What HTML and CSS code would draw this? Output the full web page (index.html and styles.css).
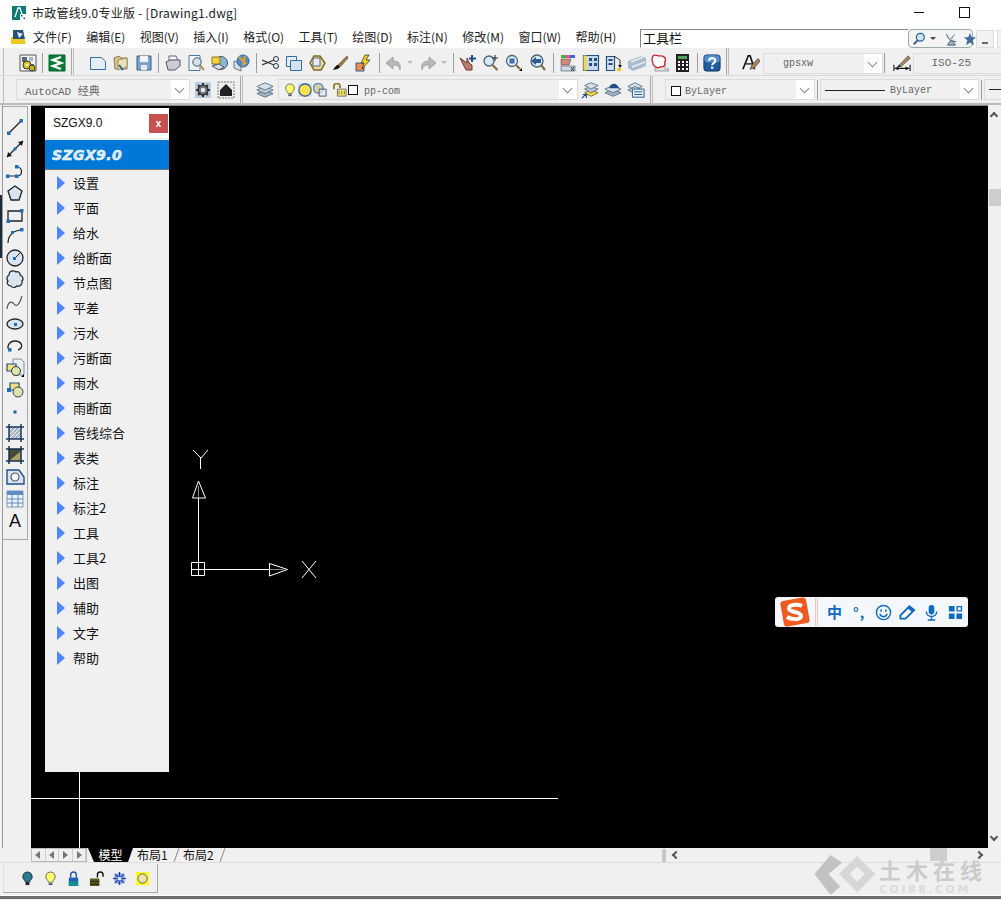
FILE: index.html
```html
<!DOCTYPE html>
<html lang="zh">
<head>
<meta charset="utf-8">
<title>市政管线9.0专业版</title>
<link rel="stylesheet" href="styles.css">
</head>
<body>
<svg class="sprite" xmlns="http://www.w3.org/2000/svg">
  <symbol id="cfg" viewBox="0 0 18 18"><path d="M1 1h16v16H1z" fill="#f2f2f2" stroke="#555"/><path d="M3 3h5v5H3zM10 10h5v5h-5z" fill="#5a6a7a"/><path d="M10 3h4v4h-4z" fill="#9fb4c6"/><circle cx="8" cy="11" r="4" fill="#d8c820" stroke="#333"/><circle cx="13" cy="14" r="3" fill="#c8b810" stroke="#333"/><circle cx="8" cy="11" r="1.300" fill="#fff"/></symbol>
  <symbol id="sz" viewBox="0 0 18 18"><path d="M1 1h16v16H1z" fill="#0a7a30"/><path d="M1 1h16v16H1z" fill="none" stroke="#063" /><path d="M13 3L5 6l8 3-8 3 8 3" fill="none" stroke="#fff" stroke-width="2.400"/></symbol>
  <symbol id="new" viewBox="0 0 18 18"><path d="M1.500 3.500h11l4 4v8h-15z" fill="#e4eef6" stroke="#2f6ea5"/></symbol>
  <symbol id="open" viewBox="0 0 18 18"><path d="M2 4l5-2 2 2h6v11H3z" fill="#d9c48a" stroke="#8a7a4a"/><path d="M6 6l9-2v9l-9 3z" fill="#efe2b8" stroke="#a08f5c"/><path d="M7 11l4 5" stroke="#2a5d9c" stroke-width="2"/></symbol>
  <symbol id="save" viewBox="0 0 18 18"><path d="M2 2h14v14H2z" fill="#7fa3c7" stroke="#2f5f8f"/><path d="M5 2h8v6H5z" fill="#eef3f8"/><path d="M6 11h6v5H6z" fill="#dfe8f0"/></symbol>
  <symbol id="print" viewBox="0 0 18 18"><path d="M5 2h7l2 5H5z" fill="#f4f4f4" stroke="#667"/><path d="M2 8l4-2h10v6l-5 4H4z" fill="#c9ced6" stroke="#556"/></symbol>
  <symbol id="preview" viewBox="0 0 18 18"><path d="M2 1.500h11v15H2z" fill="#f2f6fa" stroke="#4a7aa6"/><circle cx="10" cy="8" r="4.200" fill="#cfe3f2" stroke="#456"/><path d="M13 11l4 5" stroke="#a9864d" stroke-width="2"/></symbol>
  <symbol id="publish" viewBox="0 0 18 18"><circle cx="11" cy="9" r="6.500" fill="#8db5d8" stroke="#456"/><path d="M2 3h8v7H2z" fill="#f2d23e" stroke="#8a7a20"/><path d="M2 12l7-2 5 3-5 3z" fill="#d7dde4" stroke="#556"/></symbol>
  <symbol id="web" viewBox="0 0 18 18"><path d="M1 7l7 3v7l-7-3z" fill="#d5dbe4" stroke="#778"/><circle cx="10" cy="7" r="6" fill="#4b8fd0" stroke="#2f5f9f"/><path d="M6 3l7 7M12 2l-2 10" stroke="#e8a020" stroke-width="2"/></symbol>
  <symbol id="cut" viewBox="0 0 18 18"><path d="M0 6l12 5M0 11l12-5" stroke="#333" stroke-width="1.300"/><circle cx="14" cy="5" r="2.500" fill="none" stroke="#234"/><circle cx="14" cy="12" r="2.500" fill="none" stroke="#234"/></symbol>
  <symbol id="copy" viewBox="0 0 18 18"><path d="M1.500 2.500h10v10h-10z" fill="#e6eef5" stroke="#2f6ea5"/><path d="M5.500 6.500h11v10h-11z" fill="#d4e2ee" stroke="#2f6ea5"/></symbol>
  <symbol id="paste" viewBox="0 0 18 18"><path d="M6 2l6 0 5 7-4 7H6L2 9z" fill="#e6d9a8" stroke="#806a20" stroke-width="1.500"/><path d="M5 4h7v8H5z" fill="#e8eef4" stroke="#567"/></symbol>
  <symbol id="brush" viewBox="0 0 18 18"><path d="M16 2L7 11l2 2 8-9z" fill="#a8784a" stroke="#5c3a1a" stroke-width=".6"/><path d="M7 11c-2 0-3 2-5 5 3-.5 6-1 7-3z" fill="#111"/></symbol>
  <symbol id="match" viewBox="0 0 18 18"><path d="M2 9h8v8H2z" fill="#f28a50" stroke="#2f5f8f"/><path d="M11 1L7 9h3l-2 6 8-9h-4l3-5z" fill="#f0d020" stroke="#222" stroke-width=".7"/></symbol>
  <symbol id="undo" viewBox="0 0 18 18"><path d="M15 16c1-6-1-9-7-9V3L1 9l7 6v-4c4 0 6 1 7 5z" fill="#b8b8b8" stroke="#a4a4a4"/></symbol>
  <symbol id="redo" viewBox="0 0 18 18"><path d="M3 16c-1-6 1-9 7-9V3l7 6-7 6v-4c-4 0-6 1-7 5z" fill="#b8b8b8" stroke="#a4a4a4"/></symbol>
  <symbol id="pan" viewBox="0 0 18 18"><path d="M1 4l7 5V4l2 5 3 2v5H7z" fill="#b97c6e" stroke="#6d3a30"/><path d="M13 1v7M10 4.500h7" stroke="#1d4f8c" stroke-width="2"/></symbol>
  <symbol id="zoom" viewBox="0 0 18 18"><circle cx="7" cy="7" r="5" fill="#d7e8f4" stroke="#4a6478" stroke-width="1.300"/><path d="M10.500 11l5 5" stroke="#8a6a3a" stroke-width="2.200"/><path d="M13 1v6M10 4h6" stroke="#222"/></symbol>
  <symbol id="zoomw" viewBox="0 0 18 18"><circle cx="7" cy="7" r="5.500" fill="#e0edf6" stroke="#4a6478" stroke-width="1.300"/><path d="M4.500 4.500h5v5h-5z" fill="#3a6fb0"/><path d="M11 11l4 4" stroke="#8a6a3a" stroke-width="2.200"/><path d="M14 17l3-3v3z" fill="#000"/></symbol>
  <symbol id="zoomp" viewBox="0 0 18 18"><circle cx="9" cy="7" r="6" fill="#d7e8f4" stroke="#4a6478" stroke-width="1.300"/><path d="M3 7l5-4v2h5v4H8v2z" fill="#2f5d92"/><path d="M13 11l4 5" stroke="#8a6a3a" stroke-width="2.200"/></symbol>
  <symbol id="props" viewBox="0 0 18 18"><path d="M2 1h14v3H2z" fill="#e05090"/><path d="M2 1h5v3H2z" fill="#40b040"/><path d="M11 1h5v3h-5z" fill="#4060e0"/><path d="M2 5l10 0-2 6H2z" fill="#c98a80" stroke="#633" stroke-width=".5"/><path d="M2 12h14v5H2z" fill="#cfd8e2" stroke="#456" stroke-width=".6"/><path d="M12 13l3 4m-3 0l3-4" stroke="#234"/></symbol>
  <symbol id="design" viewBox="0 0 18 18"><path d="M1.500 1.500h15v15h-15z" fill="#c5d8ea" stroke="#24507e" stroke-width="1.200"/><path d="M1.500 1.500h3v15h-3z" fill="#f0d84a"/><path d="M7 4h3v3H7zM12 4h3v3h-3zM7 9h3v3H7zM12 9h3v3h-3z" fill="#24507e"/></symbol>
  <symbol id="tool" viewBox="0 0 18 18"><path d="M1.500 2.500h8v14h-8z" fill="#d2e0ee" stroke="#24507e" stroke-width="1.200"/><path d="M3.500 5h4v2h-4zM3.500 9h4v2h-4z" fill="#24507e"/><path d="M9 2l6 4v5" fill="none" stroke="#333"/><path d="M13 11h4l-2 3z" fill="#111"/><path d="M12 14h4v3h-4z" fill="#e8c820"/></symbol>
  <symbol id="sheet" viewBox="0 0 18 18"><path d="M0 7l13-5 5 2v8l-13 5-5-3z" fill="#a9bccb"/><path d="M3 8l12-5M4 13l13-5" stroke="#e8eef4" stroke-width="1.500"/></symbol>
  <symbol id="cloud" viewBox="0 0 18 18"><path d="M4 3h10v12h4v2H4z" fill="#e4e4e4" stroke="#667" stroke-width=".6"/><path d="M2 2c2-2 5 0 6 0s3-1 5 1 2 3 1 4 1 3-1 5-3 0-4 1-3 1-4 0-3-1-3-3-1-3-1-4 0-3 1-4z" fill="#fff" stroke="#d02030" stroke-width="1.300"/></symbol>
  <symbol id="calc" viewBox="0 0 18 18"><path d="M2 0h13v18H2z" fill="#222"/><path d="M4 2h9v3H4z" fill="#50a060"/><path d="M4 7h2v2H4zM8 7h2v2H8zM12 7h2v2h-2zM4 10h2v2H4zM8 10h2v2H8zM12 10h2v2h-2zM4 14h2v2H4zM8 14h2v2H8zM12 14h2v2h-2z" fill="#fff"/></symbol>
  <symbol id="help" viewBox="0 0 20 20"><rect x="1" y="1" width="18" height="18" rx="3" fill="#1d5a9e" stroke="#10325a"/><rect x="1.500" y="1.500" width="17" height="8" rx="3" fill="#4f8fcb"/><path d="M6.800 7.500c0-4 6.800-4 6.800 0 0 2.800-3.400 2.500-3.400 5" fill="none" stroke="#fff" stroke-width="2.400"/><path d="M9 14h2.500v2.500H9z" fill="#fff"/></symbol>
  <symbol id="style" viewBox="0 0 20 20"><path d="M1 17L7 2h2l5 15" fill="none" stroke="#111" stroke-width="1.800"/><path d="M4 11h8" stroke="#111" stroke-width="1.400"/><path d="M18 5l-7 7-2 5 5-2 6-7z" fill="#a9865a" stroke="#333" stroke-width=".7"/></symbol>
  <symbol id="dim" viewBox="0 0 20 20"><path d="M1 12v7M19 12v7M2 16h16" stroke="#111" stroke-width="1.200"/><path d="M2 16l4-2v4zM18 16l-4-2v4z" fill="#111"/><path d="M17 2L7 12l2 2 10-9z" fill="#a9865a" stroke="#333" stroke-width=".6"/><path d="M7 12l-3 3 5-1z" fill="#111"/></symbol>
  <symbol id="gear" viewBox="0 0 18 18"><path d="M1 1h16v16H1z" fill="#b8cde0"/><circle cx="9" cy="9" r="5" fill="#6e7680" stroke="#333" stroke-width="1.200"/><circle cx="9" cy="9" r="2.200" fill="#e8ecf0"/><path d="M9 2v3M9 13v3M2 9h3M13 9h3M4 4l2 2M14 14l-2-2M14 4l-2 2M4 14l2-2" stroke="#333" stroke-width="2"/></symbol>
  <symbol id="wspace" viewBox="0 0 18 18"><path d="M1 1h16v16H1z" fill="#eee" stroke="#777" stroke-dasharray="2 1"/><path d="M3 9l6-6 6 6v6H3z" fill="#222"/></symbol>
  <symbol id="layers" viewBox="0 0 20 20"><path d="M1 14l9-4 9 4-9 4z" fill="#9fb4c6" stroke="#5b7287"/><path d="M1 10l9-4 9 4-9 4z" fill="#bccbd8" stroke="#5b7287"/><path d="M1 6l9-4 9 4-9 4z" fill="#d7e1ea" stroke="#5b7287"/></symbol>
  <symbol id="layer2" viewBox="0 0 20 20"><path d="M4 13l7-3 8 3-8 4z" fill="#f0d84a" stroke="#806a20"/><path d="M4 9l7-3 8 3-8 4z" fill="#bccbd8" stroke="#5b7287"/><path d="M4 5l7-3 8 3-8 4z" fill="#d7e1ea" stroke="#5b7287"/><path d="M1 19l5-5M2 15h4v4" fill="none" stroke="#1d4f8c" stroke-width="1.300"/></symbol>
  <symbol id="layer3" viewBox="0 0 20 20"><path d="M1 13l9-4 9 4-9 4z" fill="#9fb4c6" stroke="#5b7287"/><path d="M1 9l9-4 9 4-9 4z" fill="#d7e1ea" stroke="#5b7287"/><path d="M6 8a5 5 0 0 1 9-3l2 3h-7z" fill="#1d4f8c"/></symbol>
  <symbol id="layer4" viewBox="0 0 20 20"><path d="M1 6l8-4 8 4-8 4z" fill="#d7e1ea" stroke="#5b7287"/><path d="M1 10l8-4 8 4-8 4z" fill="#bccbd8" stroke="#5b7287"/><path d="M6 9h13v9H6z" fill="#e8f0f7" stroke="#1d4f8c"/><path d="M8 12h9M8 15h9" stroke="#1d4f8c"/></symbol>
  <symbol id="bulb" viewBox="0 0 16 16"><path d="M8 1a5 5 0 0 0-3 9l1 2h4l1-2a5 5 0 0 0-3-9z" fill="#ffff70" stroke="#666"/><path d="M6 13h4v2H6z" fill="#555"/></symbol>
  <symbol id="sun" viewBox="0 0 16 16"><path d="M0 0h16v16H0z" fill="#cfe0f0"/><circle cx="8" cy="8" r="7" fill="#f8e050" stroke="#1d4f8c" stroke-width="1.200"/></symbol>
  <symbol id="frz" viewBox="0 0 16 16"><circle cx="6" cy="6" r="5.500" fill="#d5d2a8" stroke="#6d8db0" stroke-width="1.800"/><path d="M7 7h8v8H7z" fill="#dfe8f2" fill-opacity=".7" stroke="#446"/></symbol>
  <symbol id="lockopen" viewBox="0 0 16 16"><path d="M1 7V4a3.500 3.500 0 0 1 7 0v2" fill="none" stroke="#8a7a20" stroke-width="2"/><path d="M5 7h10v8H5z" fill="#f0e870" stroke="#666"/><path d="M7 9v4M10 9v4M13 9v4" stroke="#8a7a20"/></symbol>
  <symbol id="line" viewBox="0 0 20 20"><path d="M4 16L16 4" stroke="#222" stroke-width="1.200"/><path d="M2 14.500h3.500V18H2zM14.500 2H18v3.500h-3.500z" fill="#1d6fc4"/></symbol>
  <symbol id="xline" viewBox="0 0 20 20"><path d="M2 18L18 2" stroke="#222" stroke-width="1.300"/><path d="M18 2l-5 1 4 4zM2 18l5-1-4-4z" fill="#111"/><path d="M8.500 8.500h3v3h-3z" fill="#1d6fc4"/></symbol>
  <symbol id="pline" viewBox="0 0 20 20"><path d="M3 15h9c6 0 6-9 0-9" fill="none" stroke="#222" stroke-width="1.200"/><path d="M1 13.500h3.500V17H1zM10 13.500h3.500V17H10zM10 4h3.500v3.500H10z" fill="#1d6fc4"/></symbol>
  <symbol id="polygon" viewBox="0 0 20 20"><path d="M10 3l7 5-3 9H6L3 8z" fill="#d8e5f0" stroke="#222" stroke-width="1.300"/></symbol>
  <symbol id="rect" viewBox="0 0 20 20"><path d="M3 6h14v10H3z" fill="#e8f0f7" stroke="#222" stroke-width="1.300"/><path d="M1.500 14.500H5V18H1.500zM15 4h3.500v3.500H15z" fill="#1d6fc4"/></symbol>
  <symbol id="arc" viewBox="0 0 20 20"><path d="M3 17c0-7 5-13 14-13" fill="none" stroke="#222" stroke-width="1.200"/><path d="M6 5h3v3H6zM15 2h3.500v3.500H15z" fill="#1d6fc4"/></symbol>
  <symbol id="circle" viewBox="0 0 20 20"><circle cx="10" cy="10" r="8" fill="#d8e5f0" stroke="#222" stroke-width="1.300"/><path d="M10 10l5-5" stroke="#222"/><path d="M8 9h3v3H8z" fill="#1d6fc4"/></symbol>
  <symbol id="rev" viewBox="0 0 20 20"><path d="M5 2c2-2 5-1 6 0 2-1 5 1 4 3 3 1 4 4 2 6 1 3-2 6-5 5-2 2-5 2-6 0-3 0-5-3-3-5-2-2-1-5 1-6 0-1 0-2 1-3z" fill="#d8e5f0" stroke="#222" stroke-width="1.200"/></symbol>
  <symbol id="spline" viewBox="0 0 20 20"><path d="M2 17c1-8 5-8 7-5s5 2 8-8" fill="none" stroke="#555" stroke-width="1.200"/></symbol>
  <symbol id="ellipse" viewBox="0 0 20 20"><ellipse cx="10" cy="10" rx="8" ry="5" fill="#d8e5f0" stroke="#222" stroke-width="1.300"/><path d="M9 9h3v3H9z" fill="#1d6fc4"/></symbol>
  <symbol id="earc" viewBox="0 0 20 20"><path d="M6 15C0 12 4 5 10 5s10 6 3 9" fill="none" stroke="#222" stroke-width="1.300"/><path d="M3 12h3.500v3.500H3z" fill="#1d6fc4"/></symbol>
  <symbol id="insert" viewBox="0 0 20 20"><path d="M8 1h8l3 3v13H8z" fill="#e8eef4" stroke="#7890a8"/><path d="M2 6h9v7H2z" fill="#f0e080" stroke="#1d4f8c" stroke-width="1.200"/><circle cx="11" cy="13" r="4.500" fill="#dbe3b0" stroke="#333"/><path d="M16 19l3-3v3z" fill="#000"/></symbol>
  <symbol id="block" viewBox="0 0 20 20"><path d="M5 3h9v7H5z" fill="#f0e080" stroke="#1d4f8c" stroke-width="1.200"/><circle cx="13" cy="12" r="5" fill="#dbe3b0" stroke="#445"/><path d="M2 8h4v4H2z" fill="#1d6fc4"/></symbol>
  <symbol id="point" viewBox="0 0 20 20"><path d="M8.500 8.500h3v3h-3z" fill="#1d5fa8"/></symbol>
  <symbol id="hatch" viewBox="0 0 20 20"><path d="M4 4h12v12H4z" fill="#a9b4c2"/><path d="M4 8l4-4M4 12l8-8M4 16L16 4M8 16l8-8M12 16l4-4" stroke="#fff"/><path d="M1 4h18M1 16h18M4 1v18M16 1v18" stroke="#183a63" stroke-width="1.500"/></symbol>
  <symbol id="grad" viewBox="0 0 20 20"><path d="M4 4h12v12H4z" fill="#4a4a38"/><path d="M4 16L16 6v10z" fill="#a8a468"/><path d="M1 4h18M1 16h18M4 1v18M16 1v18" stroke="#14304f" stroke-width="1.500"/></symbol>
  <symbol id="region" viewBox="0 0 20 20"><path d="M2 3h12l5 7v7H2z" fill="#d8e5f0" stroke="#1d4f8c" stroke-width="1.400"/><circle cx="10" cy="10" r="4" fill="#f4f8fb" stroke="#556"  stroke-width="1.200"/></symbol>
  <symbol id="table" viewBox="0 0 20 20"><path d="M2 2h16v16H2z" fill="#eef3f8" stroke="#7f9cb8"/><path d="M2 2h16v4H2z" fill="#5f8dc0"/><path d="M2 10h16M2 14h16M7 6v12M13 6v12" stroke="#5f8dc0"/></symbol>
  <symbol id="sk-bulb-off" viewBox="0 0 16 16"><path d="M8 1a5 5 0 0 0-3 9l1 2h4l1-2a5 5 0 0 0-3-9z" fill="#2a7a90" stroke="#234"/><path d="M6 12h4v3H6z" fill="#222"/></symbol>
  <symbol id="sk-lock" viewBox="0 0 16 16"><path d="M5 7V4a3 3 0 0 1 6 0v3" fill="none" stroke="#2050b0" stroke-width="1.500"/><path d="M3 7h10v9H3z" fill="#2060b0"/><path d="M3 11h10v5H3z" fill="#109090"/></symbol>
  <symbol id="sk-unlock" viewBox="0 0 16 16"><path d="M9 7V4a3 3 0 0 1 6 0v2" fill="none" stroke="#111" stroke-width="1.500"/><path d="M1 8h10v8H1z" fill="#5a5a10"/><path d="M1 11h10M1 14h10" stroke="#222"/></symbol>
  <symbol id="sk-frz" viewBox="0 0 16 16"><circle cx="8" cy="8" r="6" fill="#8aa4e8"/><path d="M8 1v14M1 8h14M3 3l10 10M13 3L3 13" stroke="#1f3fa8" stroke-width="1.300"/><circle cx="8" cy="8" r="2" fill="#dfe8fb"/></symbol>
  <symbol id="sk-sun" viewBox="0 0 16 16"><path d="M1 1h14v14H1z" fill="#ffff20"/><circle cx="8" cy="8" r="5" fill="#e8e4b0" stroke="#555"/></symbol>
</svg>

<div class="app">
  <header class="titlebar">
    <svg class="appicon" viewBox="0 0 14 14"><path d="M0 0h14v14H0z" fill="#0d7a78"/><path d="M3 11l3-9h2l3 9" fill="none" stroke="#fff" stroke-width="1.300"/><path d="M8 8h6v6H8z" fill="#fff"/><path d="M9 9h1.500v1.500H9zM11.500 11.500H13V13h-1.500z" fill="#0d5a58"/></svg>
    <span class="titletext">市政管线9.0专业版 - [Drawing1.dwg]</span>
    <div class="winctl">
      <span class="winmin"></span>
      <span class="winmax"></span>
    </div>
  </header>

  <nav class="menubar">
    <svg class="docicon" viewBox="0 0 16 16"><path d="M0 8l12-2 3 9H0z" fill="#f0c820"/><path d="M2 1h10l2 9H2z" fill="#24507e"/><path d="M6 3l6 2-4 4z" fill="#e6eef5"/></svg>
    <ul class="menus">
      <li>文件(F)</li><li>编辑(E)</li><li>视图(V)</li><li>插入(I)</li><li>格式(O)</li><li>工具(T)</li><li>绘图(D)</li><li>标注(N)</li><li>修改(M)</li><li>窗口(W)</li><li>帮助(H)</li>
    </ul>
    <div class="search">工具栏</div>
    <div class="searchbtns">
      <svg viewBox="0 0 16 16" class="sb-mag"><circle cx="9.500" cy="6" r="4.500" fill="#d0e4f4" stroke="#2f5f8f" stroke-width="1.400"/><path d="M6.500 9.500L2 14" stroke="#2f5f8f" stroke-width="2.200"/></svg>
      <span class="sb-caret"></span>
      <svg viewBox="0 0 16 16" class="sb-sat"><path d="M3 2c1 6 5 9 11 9" fill="#cfdce8" stroke="#456"/><path d="M8 8l4-5" stroke="#456"/><path d="M4 15h9l-3-5H7z" fill="#9fb4c6" stroke="#456"/></svg>
      <svg viewBox="0 0 16 16" class="sb-star"><path d="M8 1l2 5h5l-4 3.500 1.500 5.500L8 12l-4.500 3L5 9.500 1 6h5z" fill="#3f6a9e"/></svg>
    </div>
    <div class="mdibtn"><span></span></div>
    <div class="mdibtn"></div>
  </nav>

  <div class="toolbar first">
    <div class="tbgroup g-first">
      <svg class="ico"><use href="#cfg"/></svg>
      <i class="sep"></i>
      <svg class="ico"><use href="#sz"/></svg>
    </div>
    <div class="tbgroup g-std">
      <svg class="ico"><use href="#new"/></svg><svg class="ico"><use href="#open"/></svg><svg class="ico"><use href="#save"/></svg>
      <i class="sep"></i>
      <svg class="ico"><use href="#print"/></svg><svg class="ico"><use href="#preview"/></svg><svg class="ico"><use href="#publish"/></svg><svg class="ico"><use href="#web"/></svg>
      <i class="sep"></i>
      <svg class="ico"><use href="#cut"/></svg><svg class="ico"><use href="#copy"/></svg><svg class="ico"><use href="#paste"/></svg><svg class="ico"><use href="#brush"/></svg><svg class="ico"><use href="#match"/></svg>
      <i class="sep wide"></i>
      <svg class="ico"><use href="#undo"/></svg><span class="drop"></span><svg class="ico"><use href="#redo"/></svg><span class="drop"></span>
      <i class="sep"></i>
      <svg class="ico"><use href="#pan"/></svg><svg class="ico"><use href="#zoom"/></svg><svg class="ico"><use href="#zoomw"/></svg><svg class="ico"><use href="#zoomp"/></svg>
      <i class="sep wide"></i>
      <svg class="ico"><use href="#props"/></svg><svg class="ico"><use href="#design"/></svg><svg class="ico"><use href="#tool"/></svg><svg class="ico"><use href="#sheet"/></svg><svg class="ico"><use href="#cloud"/></svg><svg class="ico"><use href="#calc"/></svg>
      <i class="sep"></i>
      <svg class="ico"><use href="#help"/></svg>
    </div>
    <div class="tbgroup g-style">
      <svg class="ico"><use href="#style"/></svg>
      <div class="combo c-style"><span class="combotext">gpsxw</span><b class="arrow"></b></div>
      <i class="sep tight"></i>
      <svg class="ico"><use href="#dim"/></svg>
      <div class="combo c-dim"><span class="combotext big">ISO-25</span></div>
    </div>
  </div>

  <div class="toolbar second">
    <div class="tbgroup g-ws">
      <div class="combo c-ws"><span class="combotext big">AutoCAD 经典</span><b class="arrow"></b></div>
      <svg class="ico"><use href="#gear"/></svg><svg class="ico"><use href="#wspace"/></svg>
    </div>
    <div class="tbgroup g-layer">
      <svg class="ico"><use href="#layers"/></svg>
      <div class="combo c-layer">
        <svg class="mini"><use href="#bulb"/></svg><svg class="mini"><use href="#sun"/></svg><svg class="mini"><use href="#frz"/></svg><svg class="mini lock"><use href="#lockopen"/></svg><span class="swatch"></span>
        <span class="combotext lname">pp-com</span><b class="arrow"></b>
      </div>
      <svg class="ico"><use href="#layer2"/></svg><svg class="ico"><use href="#layer3"/></svg><svg class="ico"><use href="#layer4"/></svg>
    </div>
    <div class="tbgroup g-prop">
      <div class="combo c-color"><span class="swatch"></span><span class="combotext">ByLayer</span><b class="arrow"></b></div>
      <i class="sep narrow"></i>
      <div class="combo c-ltype"><span class="lt"></span><span class="combotext">ByLayer</span><b class="arrow"></b></div>
      <i class="sep narrow"></i>
      <div class="combo c-lw"><span class="lt"></span></div>
    </div>
  </div>

  <main class="work">
    <aside class="edge"></aside>
    <div class="drawbar">
      <svg class="dico"><use href="#line"/></svg><svg class="dico"><use href="#xline"/></svg><svg class="dico"><use href="#pline"/></svg><svg class="dico"><use href="#polygon"/></svg><svg class="dico"><use href="#rect"/></svg><svg class="dico"><use href="#arc"/></svg><svg class="dico"><use href="#circle"/></svg><svg class="dico"><use href="#rev"/></svg><svg class="dico"><use href="#spline"/></svg><svg class="dico"><use href="#ellipse"/></svg><svg class="dico"><use href="#earc"/></svg><svg class="dico"><use href="#insert"/></svg><svg class="dico"><use href="#block"/></svg><svg class="dico"><use href="#point"/></svg><svg class="dico"><use href="#hatch"/></svg><svg class="dico"><use href="#grad"/></svg><svg class="dico"><use href="#region"/></svg><svg class="dico"><use href="#table"/></svg>
      <span class="dtext">A</span>
    </div>
    <div class="canvas">
      <svg class="cad" viewBox="31 106 957 742" width="957" height="742">
        <g fill="none" stroke="#fff" stroke-width="1">
          <path d="M31 798.500H558M79.500 700V848"/>
          <path d="M191.500 562.500h13v13h-13zM198.500 575.500V498M204.500 569.500H269M191.500 569.500h13"/>
          <path d="M198.500 481l-6 17h13z"/>
          <path d="M269.500 563.500v12.500l18-6.500z"/>
          <path d="M198.500 486v12M269.500 569.500h14" stroke="#888"/>
          <path d="M302 561l14 17M316 561l-14 17M193 450l8 8 7-8M200.500 458v11"/>
        </g>
      </svg>

      <section class="palette">
        <div class="palhead"><span>SZGX9.0</span><button class="palclose">x</button></div>
        <div class="pallogo">SZGX9.0</div>
        <ul class="pallist">
          <li>设置</li><li>平面</li><li>给水</li><li>给断面</li><li>节点图</li><li>平差</li><li>污水</li><li>污断面</li><li>雨水</li><li>雨断面</li><li>管线综合</li><li>表类</li><li>标注</li><li>标注2</li><li>工具</li><li>工具2</li><li>出图</li><li>辅助</li><li>文字</li><li>帮助</li>
        </ul>
      </section>

      <div class="ime">
        <svg class="imelogo" viewBox="0 0 32 32"><rect x="3" y="3" width="26" height="26" rx="3" transform="rotate(-10 16 16)" fill="#f05a20"/><path d="M23 10c-3-2-13-2-13 2.500S22 15 22 20s-11 3-14 1" fill="none" stroke="#fff" stroke-width="4"/></svg>
        <i class="imesep"></i>
        <span class="imezh">中</span>
        <span class="imepunct">°,</span>
        <svg class="imeico" viewBox="0 0 18 18"><circle cx="9" cy="9" r="7.500" fill="none" stroke="#0f6cc4" stroke-width="1.500"/><path d="M6.500 5.500v3M11.500 5.500v3M5 10.500c2 4 6 4 8 0" fill="none" stroke="#0f6cc4" stroke-width="1.400"/></svg>
        <svg class="imeico" viewBox="0 0 18 18"><path d="M1.500 12L11 2.500l5 4-9 9H1.500z" fill="none" stroke="#0f6cc4" stroke-width="2"/><path d="M9 4.500l5 4 2.500-2.500L11 1.500z" fill="#0f6cc4"/></svg>
        <svg class="imeico" viewBox="0 0 18 18"><rect x="6" y="1" width="6" height="10" rx="3" fill="#0f6cc4"/><path d="M3.500 8c0 7 11 7 11 0M9 13v4M5 17h8" fill="none" stroke="#0f6cc4" stroke-width="1.500"/></svg>
        <svg class="imeico" viewBox="0 0 18 18"><path d="M2 2h6v6H2zM2 10h6v6H2zM10 10h6v6h-6z" fill="#0f6cc4"/><path d="M10.700 2.700h4.600v4.600h-4.600z" fill="none" stroke="#0f6cc4" stroke-width="1.400"/></svg>
      </div>
    </div>
    <div class="vscroll">
      <span class="chev up"></span>
      <span class="vthumb"></span>
      <span class="chev down"></span>
    </div>
  </main>

  <div class="tabrow">
    <div class="tabnav">
      <span class="nav first"></span><span class="nav prev"></span><span class="nav next"></span><span class="nav last"></span>
    </div>
    <div class="tabs">
      <span class="tab active">模型</span><span class="tab">布局1</span><span class="tab">布局2</span>
    </div>
    <div class="hscroll">
      <span class="hgrip"></span>
      <span class="chev left"></span>
      <span class="hthumb"></span>
      <span class="chev right"></span>
    </div>
  </div>

  <footer class="statusrow">
    <div class="statusbox">
      <svg class="sico"><use href="#sk-bulb-off"/></svg><svg class="sico"><use href="#bulb"/></svg><svg class="sico"><use href="#sk-lock"/></svg><svg class="sico"><use href="#sk-unlock"/></svg><svg class="sico"><use href="#sk-frz"/></svg><svg class="sico"><use href="#sk-sun"/></svg>
    </div>
  </footer>
  <div class="bottomline"></div>

  <div class="watermark">
    <svg class="wmlogo" viewBox="0 0 60 42"><path d="M1 20L18 0l12 8-14 12 12 13-10 9z" fill="#c2c2c2"/><path d="M27 20L46 1l19 19-19 19z" fill="#d6d6d6"/><path d="M38 20l8-8 8 8-8 8z" fill="#f0f0f0"/></svg>
    <div class="wmtext"><div class="wmcn">土木在线</div><div class="wmen">COI88.COM</div></div>
  </div>
</div>
</body>
</html>
```
FILE: styles.css
```css
* { box-sizing: border-box; }
html, body { margin: 0; padding: 0; }
body { background: #f0f0f0; font-family: "Noto Sans CJK SC", "Liberation Sans", sans-serif; color: #111; }
.sprite { position: absolute; width: 0; height: 0; overflow: hidden; }
ul { list-style: none; margin: 0; padding: 0; }

.app { position: relative; width: 1001px; height: 900px; overflow: hidden; background: #f0f0f0; display: flex; flex-direction: column; }

.titlebar { height: 28px; background: #fff; display: flex; align-items: center; padding-left: 12px; flex: none; }
.appicon { width: 14px; height: 14px; margin-top: -2px; }
.titletext { margin-left: 6px; font-size: 12px; line-height: 14px; margin-top: -2px; color: #222; letter-spacing: .26px; }
.winctl { margin-left: auto; display: flex; align-items: center; padding-right: 31px; margin-top: -4px; }
.winmin { width: 10px; height: 1px; background: #111; margin-right: 35px; }
.winmax { width: 11px; height: 11px; border: 1px solid #111; }

.menubar { height: 20px; background: #fff; display: flex; align-items: flex-start; padding: 1px 0 0 11px; flex: none; }
.docicon { width: 16px; height: 16px; flex: none; }
.menus { display: flex; flex: none; margin-left: 6px; width: 607px; font-size: 12px; color: #222; overflow: hidden; }
.menus li { line-height: 16px; white-space: nowrap; margin-right: 14.400px; flex: none; }
.search { width: 268px; height: 19px; flex: none; background: #fff; border: 1px solid #888; border-right: 0; border-bottom-color: #fff; font-size: 13px; line-height: 16px; padding-left: 2px; color: #111; }
.searchbtns { width: 65px; height: 19px; flex: none; border: 1px solid #9aa; border-radius: 4px; display: flex; align-items: center; padding-left: 3px; gap: 1px; background: #f4f4f4; }
.searchbtns svg { width: 14px; height: 14px; flex: none; }
.sb-caret { width: 0; height: 0; border: 3px solid transparent; border-top: 3px solid #444; margin: 3px 3px 0 3px; flex: none; }
.searchbtns .sb-sat { margin: 0 4px 0 4px; }
.mdibtn { width: 18px; height: 18px; margin: 1px 0 0 3px; background: #f2f2f2; border: 1px solid #ddd; flex: none; position: relative; }
.mdibtn span { position: absolute; left: 5px; bottom: 3px; width: 6px; height: 2px; background: #667; }

.toolbar { height: 28px; display: flex; align-items: stretch; flex: none; padding-left: 3px; background: #f0f0f0; border-bottom: 1px solid #dadada; }
.toolbar.first .tbgroup { padding-top: 3px; }
.toolbar.second { height: 29px; border-bottom: 2px solid #bbb; }
.tbgroup { display: flex; align-items: center; border-left: 1px solid #bdbdbd; border-right: 1px solid #a8a8a8; margin: 0 1px 0 0; flex: none; }
.g-first { width: 69px; padding-left: 12px; }
.g-std { width: 654px; padding-left: 12px; }
.g-style { width: 300px; padding-left: 10px; border-right: 0; }
.g-ws { width: 238px; padding-left: 12px; }
.g-layer { width: 409px; padding-left: 10px; margin-right: 1px; }
.g-prop { width: 400px; padding-left: 12px; border-right: 0; }

.ico { width: 18px; height: 18px; margin: 0 2.500px; flex: none; }
.sep { width: 1px; height: 20px; background: #9c9c9c; margin: 0 2.500px; flex: none; }
.sep.wide { margin: 0 2.500px 0 4.500px; }
.sep.tight { margin: 0 5.500px 0 1px; }
.sep.narrow { margin: 0 2px; height: 20px; }
.drop { width: 11px; height: 4px; flex: none; position: relative; }
.drop::after { content: ""; position: absolute; left: 2px; top: 0; border: 3px solid transparent; border-top: 3px solid #bbb; }

.combo { height: 21px; display: flex; align-items: center; background: #f0f0f0; border: 1px solid #dcdcdc; flex: none; position: relative; color: #666; }
.combotext { font-family: "Liberation Mono", "Noto Sans CJK SC", monospace; font-size: 10px; color: #666; white-space: nowrap; }
.combotext.big { font-size: 11px; }
.arrow { position: absolute; right: 0; top: 0; width: 18px; height: 19px; background: #fff; }
.arrow::after { content: ""; position: absolute; left: 5px; top: 5px; width: 6px; height: 6px; border-right: 1px solid #888; border-bottom: 1px solid #888; transform: rotate(45deg); }
.c-style { width: 120px; margin-left: 1px; padding-left: 19px; }
.c-dim { width: 100px; margin-left: -1px; padding-left: 18px; }
.c-ws { width: 174px; margin-right: 1px; padding-left: 8px; }
.c-layer { width: 300px; margin: 0 0 0 2px; padding-left: 4px; gap: 0; }
.mini { width: 14px; height: 14px; margin-right: 1px; flex: none; }
.mini.lock { margin: 0 1px 0 5px; }
.swatch { width: 10px; height: 10px; border: 1px solid #111; background: #fff; flex: none; }
.lname { margin: 3px 0 0 6px; }
.c-color { width: 150px; padding: 3px 0 0 5px; gap: 4px; }
.c-ltype { width: 159px; padding: 2px 0 0 4px; gap: 5px; justify-content: flex-start; }
.lt { width: 60px; height: 1px; background: #222; flex: none; }
.c-lw { width: 40px; padding-left: 4px; border-right: 0; }

.work { height: 743px; display: flex; flex: none; background: #f0f0f0; }
.edge { width: 3px; height: 743px; border-right: 1px solid #9a9a9a; flex: none; background: linear-gradient(to bottom, transparent 90px, #1d2a38 90px, #1d2a38 153px, transparent 153px); }
.drawbar { width: 25px; height: 434px; margin-top: 1px; border: 1px solid #a8a8a8; border-left: 0; display: flex; flex-direction: column; align-items: center; padding-top: 10px; flex: none; }
.dico { width: 20px; height: 20px; margin-bottom: 1.900px; flex: none; }
.dtext { font-family: "Liberation Sans", sans-serif; font-size: 18px; line-height: 20px; color: #111; }
.canvas { position: relative; width: 957px; margin-left: 3px; background: #000; border-top: 1px solid #888; flex: none; }
.cad { position: absolute; left: 0; top: 0; }
.palette { position: absolute; left: 14px; top: 2px; width: 124px; height: 664px; background: #f0f0f0; }
.palhead { height: 30px; background: #fff; display: flex; align-items: center; justify-content: space-between; padding: 0 1px 0 8px; font-family: "Liberation Sans", sans-serif; font-size: 12px; color: #111; }
.palclose { width: 19px; height: 19px; padding: 0; border: 0; background: #c75050; color: #fff; font: bold 10px/19px "Liberation Sans", sans-serif; }
.pallogo { margin-top: 2px; height: 30px; background: #0078d7; color: #d5e9fb; font-family: "DejaVu Sans", sans-serif; font-weight: 700; font-size: 14px; line-height: 30px; padding-left: 7px; border-bottom: 1px solid #777; font-style: italic; -webkit-text-stroke: .5px #fff; letter-spacing: .4px; }
.pallist { padding: 0; margin-top: 0; }
.pallist li { height: 25px; display: flex; align-items: center; font-size: 13px; line-height: 25px; padding-left: 12px; color: #111; }
.pallist li::before { content: ""; width: 0; height: 0; border-left: 8px solid #4d86ff; border-top: 7px solid transparent; border-bottom: 7px solid transparent; margin-right: 8px; }

.ime { position: absolute; left: 744px; top: 491px; width: 193px; height: 30px; background: #f4f7fc; border-radius: 3px; display: flex; align-items: center; padding-left: 4px; }
.imelogo { width: 32px; height: 32px; flex: none; }
.imesep { width: 3px; height: 28px; border-left: 1px solid #f6c4b0; border-right: 1px solid #f6c4b0; margin: 0 9px 0 4px; flex: none; }
.imezh { font-size: 15px; font-weight: 700; color: #0f6cc4; line-height: 30px; width: 17px; flex: none; }
.imepunct { font-size: 14px; font-weight: 700; color: #0f6cc4; width: 22px; margin-left: 9px; letter-spacing: 1px; flex: none; }
.imeico { width: 17px; height: 17px; margin-right: 7px; flex: none; }

.vscroll { position: relative; flex: 1; background: #f0f0f0; }
.vthumb { position: absolute; left: 1px; top: 84px; width: 12px; height: 17px; background: #cdcdcd; }
.chev { position: absolute; width: 6px; height: 6px; border-left: 2px solid #555; border-top: 2px solid #555; }
.chev.up { left: 3px; top: 8px; transform: rotate(45deg); }
.chev.down { left: 3px; top: 729px; transform: rotate(225deg); }
.chev.left { left: 11px; top: 4px; transform: rotate(-45deg); }
.chev.right { left: 314px; top: 4px; transform: rotate(135deg); }

.tabrow { height: 15px; display: flex; flex: none; padding-left: 31px; background: #f0f0f0; border-bottom: 1px solid #ddd; }
.tabnav { width: 56px; display: flex; border: 1px solid #bbb; flex: none; height: 14px; }
.nav { flex: 1; border-right: 1px solid #ccc; position: relative; }
.nav::before { content: ""; position: absolute; top: 2px; border: 4.500px solid transparent; }
.nav.first::before, .nav.prev::before { left: -1px; border-right: 5px solid #777; border-left: 0; margin-left: 4px; }
.nav.next::before, .nav.last::before { left: 4px; border-left: 5px solid #777; border-right: 0; }
.tabs { display: flex; width: 575px; flex: none; font-size: 12px; line-height: 14px; color: #111; padding-left: 1px; }
.tab { width: 46px; flex: none; padding-left: 4px; white-space: nowrap; height: 14px; position: relative; }
.tab::after { content: ""; position: absolute; right: 2px; top: 0; width: 1px; height: 14px; background: #888; transform: rotate(20deg); }
.tab.active { background: #000; color: #fff; padding: 0; clip-path: polygon(0 0, 100% 0, calc(100% - 5px) 100%, 6px 100%); width: 45px; text-align: center; }
.tab.active::after { display: none; }
.hscroll { position: relative; flex: 1; }
.hgrip { position: absolute; left: 0; top: 1px; width: 4px; height: 13px; background: #c8c8c8; }
.hthumb { position: absolute; left: 268px; top: 0; width: 17px; height: 13px; background: #cdcdcd; }

.statusrow { height: 33px; display: flex; flex: none; padding: 1px 0 0 3px; background: #f0f0f0; border-bottom: 1px solid #fff; }
.statusbox { width: 155px; height: 29px; border-right: 1px solid #a8a8a8; border-bottom: 1px solid #a8a8a8; border-left: 1px solid #ddd; display: flex; align-items: center; padding-left: 16px; gap: 8px; }
.sico { width: 15px; height: 15px; flex: none; }
.bottomline { height: 3px; background: #6e6e6e; flex: none; }

.watermark { position: absolute; left: 811px; top: 855px; display: flex; gap: 6px; pointer-events: none; }
.wmlogo { width: 62px; height: 40px; flex: none; overflow: visible; }
.wmtext { margin-top: 3px; }
.wmcn { font-size: 22px; font-weight: 700; line-height: 23px; letter-spacing: 5px; color: #cbcbcb; white-space: nowrap; }
.wmen { margin-top: 4px; font-family: "DejaVu Sans", sans-serif; font-size: 11px; line-height: 10px; letter-spacing: 2.500px; color: #dcdcdc; font-weight: 700; }
```
